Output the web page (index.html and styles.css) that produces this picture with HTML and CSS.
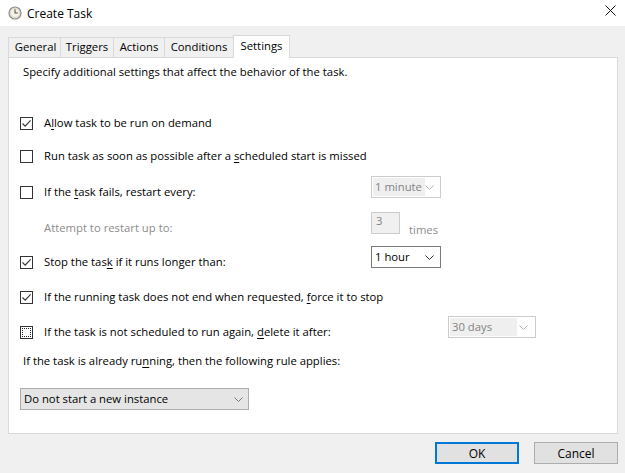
FILE: index.html
```html
<!DOCTYPE html>
<html>
<head>
<meta charset="utf-8">
<link rel="stylesheet" href="styles.css">
</head>
<body>
<div class="window">
  <div class="titlebar">
    <svg class="appicon" width="14" height="14" viewBox="0 0 14 14">
      <circle cx="7" cy="7" r="6" fill="#f4f1e6" stroke="#8a8a8a" stroke-width="1.2"/>
      <circle cx="7" cy="7" r="4.6" fill="none" stroke="#d6d0bc" stroke-width="0.8"/>
      <path d="M7 3.2 V7 H9.8" fill="none" stroke="#555" stroke-width="1.1"/>
    </svg>
    <span class="title">Create Task</span>
    <svg class="close" width="11" height="11" viewBox="0 0 11 11">
      <path d="M0.5 0.5 L10.5 10.5 M10.5 0.5 L0.5 10.5" stroke="#111" stroke-width="1"/>
    </svg>
  </div>
  <div class="content">
    <div class="tabs">
      <div class="tab t-general">General</div>
      <div class="tab t-triggers">Triggers</div>
      <div class="tab t-actions">Actions</div>
      <div class="tab t-conditions">Conditions</div>
      <div class="tab t-settings active">Settings</div>
    </div>
    <div class="panel">
      <p class="intro">Specify additional settings that affect the behavior of the task.</p>

      <div class="row r1">
        <div class="left">
          <span class="cb checked"><svg width="11" height="11" viewBox="0 0 11 11"><path d="M1.5 5.5 L4.2 8.2 L9.6 2.4" fill="none" stroke="#333" stroke-width="1.1"/></svg></span>
          <span class="lbl">A<u>l</u>low task to be run on demand</span>
        </div>
      </div>

      <div class="row r2">
        <div class="left">
          <span class="cb"></span>
          <span class="lbl">Run task as soon as possible after a <u>s</u>cheduled start is missed</span>
        </div>
      </div>

      <div class="row r3">
        <div class="left">
          <span class="cb"></span>
          <span class="lbl">If the <u>t</u>ask fails, restart every:</span>
        </div>
        <div class="combo disabled w70">
          <span class="field">1 minute</span>
          <svg class="chev" width="9" height="5" viewBox="0 0 9 5"><path d="M0.5 0.5 L4.5 4.5 L8.5 0.5" fill="none" stroke="#b5b5b5" stroke-width="1"/></svg>
        </div>
      </div>

      <div class="row r4">
        <div class="left indent">
          <span class="lbl dim">Attempt to restart up to:</span>
        </div>
        <div class="spin">3</div>
        <span class="times dim">times</span>
      </div>

      <div class="row r5">
        <div class="left">
          <span class="cb checked"><svg width="11" height="11" viewBox="0 0 11 11"><path d="M1.5 5.5 L4.2 8.2 L9.6 2.4" fill="none" stroke="#333" stroke-width="1.1"/></svg></span>
          <span class="lbl">Stop the tas<u>k</u> if it runs longer than:</span>
        </div>
        <div class="combo active-combo w70">
          <span class="field">1 hour</span>
          <svg class="chev" width="9" height="5" viewBox="0 0 9 5"><path d="M0.5 0.5 L4.5 4.5 L8.5 0.5" fill="none" stroke="#333" stroke-width="1"/></svg>
        </div>
      </div>

      <div class="row r6">
        <div class="left">
          <span class="cb checked"><svg width="11" height="11" viewBox="0 0 11 11"><path d="M1.5 5.5 L4.2 8.2 L9.6 2.4" fill="none" stroke="#333" stroke-width="1.1"/></svg></span>
          <span class="lbl">If the running task does not end when requested, <u>f</u>orce it to stop</span>
        </div>
      </div>

      <div class="row r7">
        <div class="left wide">
          <span class="cb focus"></span>
          <span class="lbl">If the task is not scheduled to run again, <u>d</u>elete it after:</span>
        </div>
        <div class="combo disabled w88">
          <span class="field">30 days</span>
          <svg class="chev" width="9" height="5" viewBox="0 0 9 5"><path d="M0.5 0.5 L4.5 4.5 L8.5 0.5" fill="none" stroke="#b5b5b5" stroke-width="1"/></svg>
        </div>
      </div>

      <p class="rule">If the task is already ru<u>n</u>ning, then the following rule applies:</p>

      <div class="combo readonly w229">
        <span class="field">Do not start a new instance</span>
        <svg class="chev" width="9" height="5" viewBox="0 0 9 5"><path d="M0.5 0.5 L4.5 4.5 L8.5 0.5" fill="none" stroke="#777" stroke-width="1"/></svg>
      </div>
    </div>
    <div class="footer">
      <button class="btn default">OK</button>
      <button class="btn">Cancel</button>
    </div>
  </div>
</div>
</body>
</html>
```

FILE: styles.css
```css
* { box-sizing: border-box; }
html, body { margin: 0; padding: 0; }
body {
  width: 625px;
  height: 473px;
  overflow: hidden;
  font-family: "Open Sans", "Noto Sans", "Liberation Sans", sans-serif;
  font-size: 11.3px;
  color: #000;
  background: #f0f0f0;
}
u { text-decoration: underline; text-underline-offset: 2px; text-decoration-thickness: 1px; }

.window { width: 625px; height: 473px; display: flex; flex-direction: column; }

.titlebar {
  height: 26px;
  background: #fff;
  display: flex;
  align-items: center;
  padding-left: 8px;
  padding-right: 8px;
}
.title { margin-left: 5px; font-size: 12px; color: #000; }
.close { margin-left: auto; margin-top: -6px; margin-right: 1px; }

.content {
  flex: 1;
  padding: 9px 7px 0 8px;
  display: flex;
  flex-direction: column;
}

.tabs {
  height: 22px;
  display: flex;
  align-items: flex-end;
}
.tab {
  height: 20px;
  border: 1px solid #d9d9d9;
  border-bottom: none;
  margin-right: -1px;
  background: #f0f0f0;
  display: flex;
  align-items: center;
  justify-content: center;
  line-height: 16px;
  padding-bottom: 1px;
}
.t-general { width: 53px; padding-left: 2px; }
.t-triggers { width: 54px; }
.t-actions { width: 52px; }
.t-conditions { width: 70px; }
.t-settings { width: 57px; }
.tab.active {
  height: 23px;
  margin-bottom: -1px;
  background: #fff;
  position: relative;
  z-index: 1;
  padding-bottom: 3px;
}

.panel {
  height: 377px;
  background: #fff;
  border: 1px solid #d9d9d9;
  padding: 6px 0 0 0;
  display: flex;
  flex-direction: column;
  align-items: flex-start;
}
.intro {
  margin: 0 0 0 14px;
  line-height: 16px;
}

.row {
  height: 22px;
  display: flex;
  align-items: center;
  padding-left: 11px;
}
.r1 { margin-top: 32px; }
.r2 { margin-top: 11px; }
.r3 { margin-top: 14px; }
.r4 { margin-top: 14px; }
.r5 { margin-top: 12px; }
.r6 { margin-top: 13px; }
.r7 { margin-top: 13px; }

.left {
  width: 351px;
  display: flex;
  align-items: center;
}
.left.wide { width: 428px; }
.left.indent { padding-left: 24px; }

.cb {
  width: 13px;
  height: 13px;
  border: 1px solid #333;
  background: #fff;
  flex: none;
  display: flex;
  align-items: center;
  justify-content: center;
}
.cb.focus { outline: 1px dotted #222; outline-offset: -3px; }
.lbl { margin-left: 11px; white-space: nowrap; line-height: 16px; }
.left.indent .lbl { margin-left: 0; }
.dim { color: #8c8c8c; }

.combo {
  height: 22px;
  display: flex;
  align-items: center;
  align-self: flex-start;
  margin-top: -5px;
  padding: 1px;
  background: #fff;
}
.combo .field {
  height: 18px;
  display: flex;
  align-items: center;
  padding-left: 2px;
  white-space: nowrap;
  line-height: 16px;
}
.combo .chev { margin-left: auto; margin-right: 6px; flex: none; }
.w70 { width: 70px; }
.w88 { width: 88px; }
.w229 { width: 229px; }

.combo.disabled { border: 1px solid #cccccc; }
.combo.disabled .field { background: #efefef; color: #838383; padding-right: 3px; }
.w88.disabled .field { width: 67px; }

.combo.active-combo { border: 1px solid #7a7a7a; }
.combo.active-combo .chev { margin-right: 5px; }

.combo.readonly {
  border: 1px solid #adadad;
  background: #e5e5e5;
  margin: 19px 0 0 11px;
}
.combo.readonly .chev { margin-right: 4px; }

.spin {
  width: 29px;
  height: 22px;
  align-self: flex-start;
  margin-top: -5px;
  border: 1px solid #cccccc;
  background: #f0f0f0;
  color: #838383;
  padding: 1px 0 0 4px;
  line-height: 14px;
}
.times { margin-left: 9px; margin-top: 2px; }

.rule {
  margin: 10px 0 0 14px;
  line-height: 16px;
}

.footer {
  display: flex;
  justify-content: flex-end;
  gap: 15px;
  margin-top: 8px;
}
.btn {
  width: 84px;
  height: 22px;
  border: 1px solid #adadad;
  background: #e1e1e1;
  font-family: inherit;
  font-size: 12px;
  color: #000;
  padding: 0;
  margin: 0;
}
.btn.default { border: 2px solid #0078d7; }
```
